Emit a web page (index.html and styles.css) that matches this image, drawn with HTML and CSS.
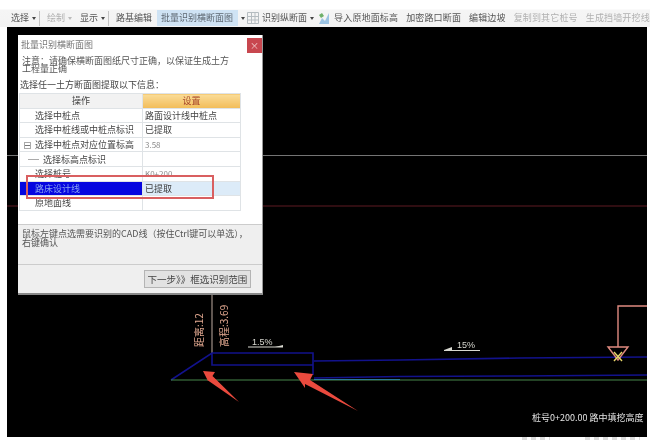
FILE: index.html
```html
<!DOCTYPE html>
<html lang="zh-CN">
<head>
    <meta charset="UTF-8">
    <title>批量识别横断面图</title>
    <link rel="stylesheet" href="styles.css">
</head>
<body>
    <div class="toolbar">
        <span class="tool tool-first">选择</span><span class="caret"></span><span class="sep"></span>
        <span class="tool tool-off">绘制</span><span class="caret caret-off"></span>
        <span class="tool">显示</span><span class="caret"></span><span class="sep"></span>
        <span class="tool">路基编辑</span>
        <span class="tool tool-active">批量识别横断面图</span><span class="caret"></span>
        <svg class="tool-icon tool-icon-grid" width="12" height="12" viewBox="0 0 12 12">
            <path d="M.5.5h11v11H.5zM.5 4.5h11M.5 8h11M4.5.5v11M8 .5v11" fill="#f4f4f4" stroke="#b5bcc0"/>
        </svg>
        <span class="tool">识别纵断面</span><span class="caret"></span>
        <svg class="tool-icon tool-icon-import" width="12" height="13" viewBox="0 0 12 13">
            <path d="M1 12 4 6l3 3 4-8v11z" fill="#9cc4e4"/>
            <path d="M1 3l3-2 2 3-3 2z" fill="#6fb06a"/>
        </svg>
        <span class="tool tool-wide">导入原地面标高</span>
        <span class="tool tool-wide">加密路口断面</span>
        <span class="tool tool-wide">编辑边坡</span>
        <span class="tool tool-wide tool-off">复制到其它桩号</span>
        <span class="tool tool-wide tool-off">生成挡墙开挖线</span>
    </div>

    <div class="canvas">
        <svg class="cad" width="640" height="410" viewBox="7 27 640 410">
            <path d="M7 155.500h640" stroke="#747474" stroke-width="1.200" fill="none"/>
            <path d="M7 206h640" stroke="#5e1a22" stroke-width="1.200" fill="none"/>
            <path d="M212 295v58" stroke="#a09088" stroke-width="1.200" fill="none"/>

            <g fill="none" stroke="#12128c" stroke-width="1.600">
                <path d="M171 380 212 353H313V375M212 353V365H313"/>
                <path d="M314 361 400 360 520 358 650 357"/>
                <path d="M314 378 400 376.500 520 376 650 375"/>
            </g>
            <path d="M171 380H650" fill="none" stroke="#46864a" stroke-width="1.200"/>
            <path d="M314 379.500H400" fill="none" stroke="#2a7a98" stroke-width="1.200"/>

            <g fill="#d8d8d0" stroke="none">
                <path d="M248 346.500h35v1h-35z"/>
                <path d="M275 347l8-2v2z"/>
                <path d="M444 350h36v1h-36z"/>
                <path d="M444 350l8-3v3z"/>
            </g>
            <text class="cad-note" x="252" y="345">1.5%</text>
            <text class="cad-note" x="457" y="348">15%</text>

            <text class="cad-dim" transform="translate(203 347) rotate(-90)">距离:12</text>
            <text class="cad-dim" transform="translate(228 347) rotate(-90)">高程:3.69</text>

            <path d="M648 306H618V347M608 347H628L618 360z" fill="none" stroke="#e08a80" stroke-width="1.400"/>
            <path d="M614 352 622 361M622 352 614 361" stroke="#e8d868" stroke-width="1.400"/>

            <text class="cad-label" x="532" y="421">桩号0+200.00 路中填挖高度</text>

            <path d="M203 371 215 372 212.500 376 239 402 208 380.500 208 381z" fill="#ea4a3e"/>
            <path d="M294 372 313 374 310 380 358 411 305 384 305 388z" fill="#ea4a3e"/>
        </svg>

        <div class="dialog">
            <div class="dialog-title">
                <span>批量识别横断面图</span>
                <span class="dialog-close">×</span>
            </div>
            <div class="dialog-note">注意：请确保横断面图纸尺寸正确，以保证生成土方工程量正确</div>
            <div class="dialog-pick">选择任一土方断面图提取以下信息：</div>

            <table class="props">
                <tr>
                    <th>操作</th>
                    <th class="props-set">设置</th>
                </tr>
                <tr>
                    <td class="lvl1">选择中桩点</td>
                    <td>路面设计线中桩点</td>
                </tr>
                <tr>
                    <td class="lvl1">选择中桩线或中桩点标识</td>
                    <td>已提取</td>
                </tr>
                <tr>
                    <td class="lvl1 has-toggle"><span class="toggle"></span>选择中桩点对应位置标高</td>
                    <td class="value-num">3.58</td>
                </tr>
                <tr>
                    <td class="lvl2"><span class="branch"></span>选择标高点标识</td>
                    <td></td>
                </tr>
                <tr>
                    <td class="lvl1">选择桩号</td>
                    <td class="value-num">K0+200</td>
                </tr>
                <tr class="row-on">
                    <td class="lvl1">路床设计线</td>
                    <td>已提取</td>
                </tr>
                <tr>
                    <td class="lvl1">原地面线</td>
                    <td></td>
                </tr>
            </table>

            <div class="dialog-hint">鼠标左键点选需要识别的CAD线（按住Ctrl键可以单选），右键确认</div>
            <div class="dialog-foot">
                <button class="next-btn">下一步》》框选识别范围</button>
            </div>

            <div class="callout"></div>
        </div>
    </div>

    <div class="foot-strip">
        <span class="foot-mark foot-mark-a"></span>
        <span class="foot-mark foot-mark-b"></span>
    </div>
</body>
</html>
```

FILE: styles.css
```css
html, body {
    margin: 0;
    padding: 0;
    background: #fff;
}

body {
    width: 650px;
    height: 443px;
    overflow: hidden;
    font-family: "Noto Sans CJK SC", "Liberation Sans", sans-serif;
    font-size: 9px;
    color: #444;
    filter: blur(0.45px);
}

.toolbar {
    box-sizing: border-box;
    height: 27px;
    padding-top: 9px;
    display: flex;
    align-items: center;
    background: linear-gradient(#fff 0, #fff 9px, #f5f5f5 10px, #f3f3f3 100%);
    white-space: nowrap;
    overflow: hidden;
}

.tool {
    margin-left: 8px;
    line-height: 16px;
    color: #555;
}

.tool-first {
    margin-left: 11px;
}

.tool-wide {
    letter-spacing: 0.15px;
}

.tool-off {
    color: #b0b0b0;
}

.tool-active {
    margin-left: 5px;
    padding: 0 5px 0 4px;
    background: #cfe3f4;
    color: #5c6670;
}

.caret {
    width: 0;
    height: 0;
    margin-left: 3px;
    border: 2.5px solid transparent;
    border-top: 3px solid #444;
    border-bottom: 0;
}

.caret-off {
    border-top-color: #bbb;
}

.sep {
    width: 1px;
    height: 15px;
    margin-left: 3px;
    margin-right: -1px;
    background: #c4c4c4;
}

.tool-icon {
    flex: none;
    margin-left: 4px;
    margin-right: -5px;
}

.tool-icon-grid {
    margin-left: 2px;
}

.tool-icon-import {
    margin-right: -4px;
}

.canvas {
    position: relative;
    width: 640px;
    height: 410px;
    margin-left: 7px;
    background: #000;
}

.cad {
    display: block;
}

.cad-note {
    font-family: "Liberation Sans", sans-serif;
    font-size: 9px;
    fill: #d8d8d0;
}

.cad-dim {
    font-size: 10px;
    fill: #e2a890;
}

.cad-label {
    font-size: 9px;
    fill: #e4e4e4;
}

.dialog {
    position: absolute;
    left: 11px;
    top: 8px;
    box-sizing: border-box;
    width: 245px;
    height: 260px;
    display: flex;
    flex-direction: column;
    background: #fff;
    border-right: 1px solid #999;
    border-bottom: 2px solid #888;
}

.dialog-title {
    height: 19px;
    display: flex;
    justify-content: space-between;
    align-items: center;
    padding-left: 3px;
    color: #777;
}

.dialog-close {
    width: 15px;
    height: 15px;
    margin-top: 2px;
    background: #c8474f;
    color: #f4d0d0;
    font-size: 9px;
    line-height: 15px;
    text-align: center;
}

.dialog-note {
    width: 211px;
    padding-left: 4px;
    line-height: 8px;
    margin-top: 3px;
    height: 18px;
    color: #555;
}

.dialog-pick {
    padding-left: 2px;
    margin-top: 3px;
    line-height: 14px;
    color: #444;
}

.props {
    width: 222px;
    margin: 1px 0 0 1px;
    border-collapse: collapse;
    table-layout: fixed;
    font-size: 9px;
}

.props th, .props td {
    height: 14.600px;
    padding: 0;
    border: 1px solid #dfe3e6;
    line-height: 13px;
    white-space: nowrap;
    overflow: hidden;
    font-weight: normal;
    box-sizing: border-box;
}

.props th {
    background: #f2f2f2;
    color: #444;
    text-align: center;
}

.props th:first-child {
    width: 123px;
}

.props .props-set {
    background: linear-gradient(#fadc98, #f2bc58);
    color: #a8482c;
}

.props td:last-child {
    padding-left: 2px;
}

.lvl1 {
    padding-left: 15px !important;
}

.lvl2 {
    padding-left: 8px !important;
}

.has-toggle {
    padding-left: 4px !important;
}

.toggle {
    display: inline-block;
    box-sizing: border-box;
    width: 7px;
    height: 7px;
    margin-right: 4px;
    border: 1px solid #aaa;
    background: linear-gradient(#777, #777) center / 5px 1px no-repeat;
    vertical-align: -1px;
}

.branch {
    display: inline-block;
    width: 11px;
    height: 1px;
    margin-right: 4px;
    background: #aaa;
    vertical-align: 3px;
}

.value-num {
    color: #8a8a8a;
    font-size: 8px;
}

.row-on td {
    background: #dcebf8;
    color: #3c3c3c;
}

.row-on td:first-child {
    background: #0606e0;
    color: #8aa4f0;
}

.dialog-hint {
    box-sizing: border-box;
    height: 41px;
    margin-top: 13px;
    padding: 4px 8px 0 4px;
    background: #efefef;
    border-top: 1px solid #ccc;
    border-bottom: 1px solid #ccc;
    line-height: 9px;
    color: #555;
}

.dialog-foot {
    flex: 1;
    display: flex;
    justify-content: flex-end;
    align-items: flex-start;
    padding: 5px 11px 0 0;
    background: #efefef;
}

.next-btn {
    width: 107px;
    height: 18px;
    padding: 0;
    border: 1px solid #b4b4b4;
    background: #e2e2e2;
    font-family: inherit;
    font-size: 9.500px;
    color: #444;
    white-space: nowrap;
}

.callout {
    position: absolute;
    left: 8px;
    top: 140px;
    box-sizing: border-box;
    width: 188px;
    height: 24px;
    border: 2px solid #d95f60;
}

.foot-strip {
    height: 6px;
    display: flex;
    align-items: flex-start;
    padding-left: 522px;
    gap: 35px;
}

.foot-mark {
    height: 3px;
    background: repeating-linear-gradient(90deg, #dcdcdc 0, #dcdcdc 5px, transparent 5px, transparent 9px);
}

.foot-mark-a {
    width: 28px;
}

.foot-mark-b {
    width: 55px;
}
```
